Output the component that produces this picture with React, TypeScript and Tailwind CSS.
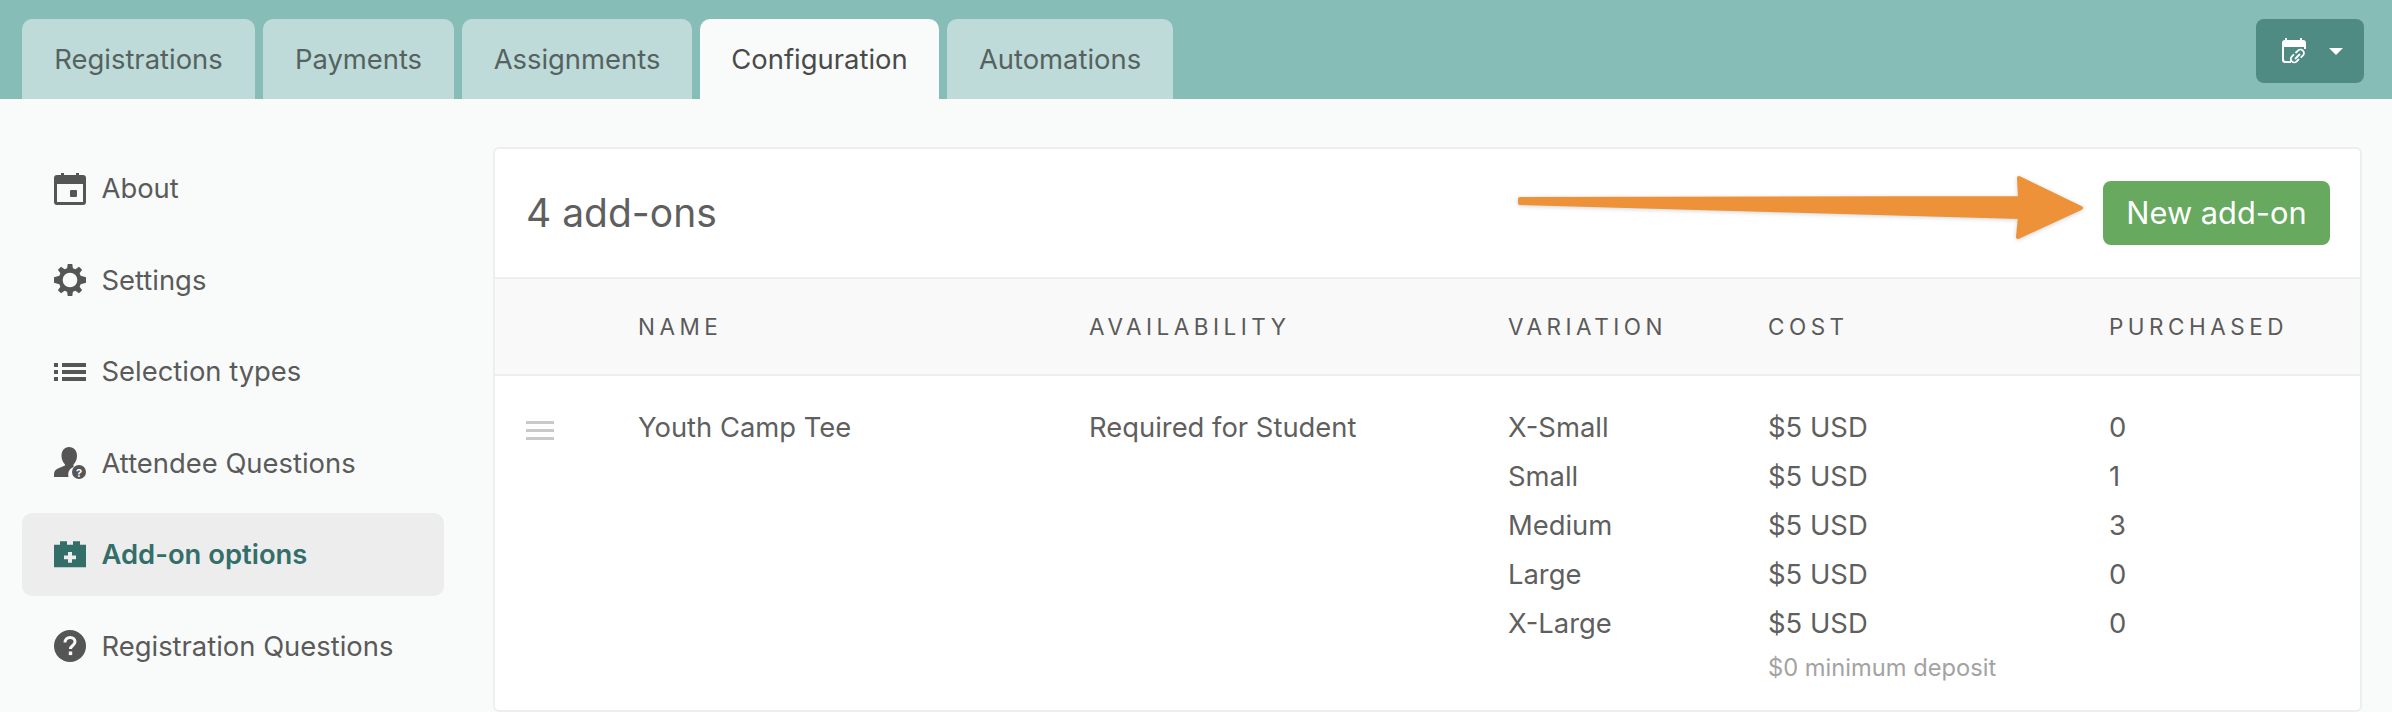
import React from "react";

const font = { fontFamily: "Inter, 'Noto Sans', sans-serif" };

function CalIcon() {
  return (
    <svg width="32" height="32" viewBox="0 0 32 32" fill="#555">
      <path fillRule="evenodd" d="M7 0h3v2h12V0h3v2h4a3 3 0 0 1 3 3v24a3 3 0 0 1-3 3H3a3 3 0 0 1-3-3V5a3 3 0 0 1 3-3h4V0ZM3 11v18h26V11H3Z" />
      <rect x="16" y="17" width="7" height="7" rx="1" />
    </svg>
  );
}

function GearIcon() {
  return (
    <svg width="32" height="32" viewBox="0 0 24 24" fill="#555">
      <path fillRule="evenodd" d="M10.3 0h3.4l.5 3.1c.7.2 1.3.5 1.9.8L18.7 2l2.4 2.4-1.900 2.600c.3.600.6 1.200.8 1.900l4 1.100v4l-4 1.100c-.2.700-.5 1.300-.8 1.900l1.900 2.600-2.400 2.400-2.600-1.900c-.6.300-1.200.6-1.900.8l-.5 3.100h-3.400l-.5-3.100c-.7-.2-1.300-.5-1.900-.8L5.300 22l-2.400-2.400 1.900-2.600c-.3-.6-.6-1.200-.8-1.900L0 14V10l4-1.100c.2-.7.500-1.300.8-1.900L2.900 4.400 5.300 2l2.600 1.900c.6-.3 1.200-.6 1.900-.8l.5-3.100ZM12 6.500a5.500 5.500 0 1 0 0 11 5.500 5.500 0 0 0 0-11Z" />
    </svg>
  );
}

function ListIcon() {
  return (
    <svg width="32" height="32" viewBox="0 0 32 32" fill="#555">
      <rect x="0" y="7" width="4" height="4" />
      <rect x="0" y="14" width="4" height="4" />
      <rect x="0" y="21" width="4" height="4" />
      <rect x="8" y="7" width="24" height="4" />
      <rect x="8" y="14" width="24" height="4" />
      <rect x="8" y="21" width="24" height="4" />
    </svg>
  );
}

function PersonIcon() {
  return (
    <svg width="32" height="32" viewBox="0 0 32 32" fill="#555">
      <path d="M15 0c5 0 8 3.500 8 9 0 3.500-1.500 6.500-3.500 8.500v2.500c-4 1.500-6 5-5 10H0v-3c0-3 2-5 5-6l6-2.500v-1c-2-2-3.500-5-3.500-8.500 0-5.500 3-9 7.500-9Z" />
      <circle cx="25" cy="25" r="7" />
      <text x="25" y="29.500" textAnchor="middle" fontSize="11" fontWeight="700" fill="#f9fbfa" fontFamily="Inter, sans-serif">?</text>
    </svg>
  );
}

function AddOnIcon() {
  return (
    <svg width="32" height="32" viewBox="0 0 32 32" fill="#336e69">
      <path fillRule="evenodd" d="M6 3h7v4h6V3h7v4h6v25H0V7h6V3Zm8 12v4h-4v4h4v4h4v-4h4v-4h-4v-4h-4Z" transform="translate(0 -0.500) scale(1 0.9)" />
    </svg>
  );
}

function QuestionIcon() {
  return (
    <svg width="32" height="32" viewBox="0 0 32 32">
      <circle cx="16" cy="16" r="16" fill="#555" />
      <path d="M11 12.500c0-3 2.200-5 5.200-5 2.800 0 4.800 1.800 4.800 4.300 0 3.700-4.500 3.700-4.500 7.200" fill="none" stroke="#f9fbfa" strokeWidth="3" />
      <rect x="14.800" y="21.500" width="3.400" height="3.600" fill="#f9fbfa" />
    </svg>
  );
}

function CalLinkIcon() {
  return (
    <svg width="24" height="26" viewBox="0 0 24 26" fill="none">
      <path fillRule="evenodd" fill="#fff" d="M3 0h2v2h13V0h2v2h1a3 3 0 0 1 3 3v6h-2V9H2v12c0 1 .5 2 1.500 2H9v2H3a3 3 0 0 1-3-3V5a3 3 0 0 1 3-3V0Z" />
      <path stroke="#fff" strokeWidth="1.800" strokeLinecap="round" d="M14 14.500l2-1.800a3.400 3.400 0 0 1 5 4.700l-1.800 1.800M16.500 21.500l-1.800 1.800a3.400 3.400 0 0 1-5-4.700l1.800-1.800M13.500 20.500l4-4" />
    </svg>
  );
}

const tabs = [
  { label: "Registrations", w: "w-[233px]" },
  { label: "Payments", w: "w-[191px]" },
  { label: "Assignments", w: "w-[230px]" },
  { label: "Configuration", w: "w-[239px]", active: true },
  { label: "Automations", w: "w-[226px]" },
];

const nav = [
  { label: "About", icon: <CalIcon /> },
  { label: "Settings", icon: <GearIcon /> },
  { label: "Selection types", icon: <ListIcon /> },
  { label: "Attendee Questions", icon: <PersonIcon /> },
  { label: "Add-on options", icon: <AddOnIcon />, active: true },
  { label: "Registration Questions", icon: <QuestionIcon /> },
];

const variations = [
  ["X-Small", "$5 USD", "0"],
  ["Small", "$5 USD", "1"],
  ["Medium", "$5 USD", "3"],
  ["Large", "$5 USD", "0"],
  ["X-Large", "$5 USD", "0"],
];

export default function App() {
  return (
    <div className="relative flex h-[712px] w-[2392px] flex-col overflow-hidden bg-[#f9fbfa] text-[27.4px] text-[#5a5a5a]" style={font}>
      <header className="flex h-[99px] shrink-0 items-end justify-between bg-[#86bdb7] pl-[22px] pr-[28px]">
        <div className="flex gap-[8px]">
          {tabs.map((t) => (
            <div
              key={t.label}
              className={`flex h-[80px] items-center justify-center rounded-t-[10px] pt-[2px] ${t.w} ${t.active ? "bg-[#f9fbfa] text-[#4a4a4a]" : "bg-[#bedbd9] text-[#55625f]"}`}
            >
              {t.label}
            </div>
          ))}
        </div>
        <div className="mb-[16px] flex h-[64px] w-[108px] items-center rounded-[8px] bg-[#4f8a83] pl-[26px]">
          <CalLinkIcon />
          <span className="ml-[23px] h-0 w-0 border-x-[7px] border-t-[7px] border-x-transparent border-t-white" />
        </div>
      </header>

      <main className="flex min-h-0 flex-1">
        <nav className="flex w-[493px] shrink-0 flex-col gap-[8.5px] pl-[22px] pt-[48px]">
          {nav.map((n) => (
            <div
              key={n.label}
              className={`flex h-[83px] w-[422px] shrink-0 items-center gap-[15.5px] rounded-[10px] pl-[32px] ${n.active ? "bg-[#ededed] font-semibold text-[#336e69]" : ""}`}
            >
              {n.icon}
              <span className="pt-[1px]">{n.label}</span>
            </div>
          ))}
        </nav>

        <section className="mt-[48px] h-[565px] w-[1869px] shrink-0 rounded-[6px] border-2 border-[#eeeeee] bg-white">
          <div className="flex h-[130px] items-center justify-between border-b-2 border-[#eeeeee] pl-[31px] pr-[30px]">
            <h1 className="text-[39px] font-normal text-[#5f5f5f]">4 add-ons</h1>
            <button className="flex h-[64px] w-[227px] items-center justify-center rounded-[8px] bg-[#66a95f] text-[30.8px] text-white">New add-on</button>
          </div>

          <div className="grid h-[97px] grid-cols-[143px_451px_419px_260px_1fr] items-center border-b-2 border-[#eeeeee] bg-[#f9f9f9] text-[22.5px] tracking-[0.2em]">
            <span />
            <span>NAME</span>
            <span>AVAILABILITY</span>
            <span>VARIATION</span>
            <div className="grid grid-cols-[341px_1fr]">
              <span>COST</span>
              <span>PURCHASED</span>
            </div>
          </div>

          <div className="grid grid-cols-[143px_451px_419px_1fr] pt-[27px] text-[#5f5f5f]">
            <div className="flex flex-col gap-[5px] pl-[31px] pt-[18px]">
              <span className="h-[3px] w-[28px] bg-[#c9c9c9]" />
              <span className="h-[3px] w-[28px] bg-[#c9c9c9]" />
              <span className="h-[3px] w-[28px] bg-[#c9c9c9]" />
            </div>
            <div className="leading-[49px]">Youth Camp Tee</div>
            <div className="leading-[49px]">Required for Student</div>
            <div>
              {variations.map((v, i) => (
                <div key={i} className="grid h-[49px] grid-cols-[260px_341px_1fr] items-center">
                  <span>{v[0]}</span>
                  <span>{v[1]}</span>
                  <span>{v[2]}</span>
                </div>
              ))}
              <div className="pl-[260px] pt-[2px] text-[23.7px] text-[#a3a3a3]">$0 minimum deposit</div>
            </div>
          </div>
        </section>
      </main>

      <svg className="absolute left-[1510px] top-[168px] drop-shadow-[0_1px_2px_rgba(0,0,0,0.18)]" width="580" height="80" viewBox="1510 168 580 80">
        <path
          d="M1520 199 L2020 198 L2019 178 L2081 208 L2018 237 L2020 217 L1520 203 Z"
          fill="#ed9239"
          stroke="#ed9239"
          strokeWidth="4"
          strokeLinejoin="round"
        />
      </svg>
    </div>
  );
}
